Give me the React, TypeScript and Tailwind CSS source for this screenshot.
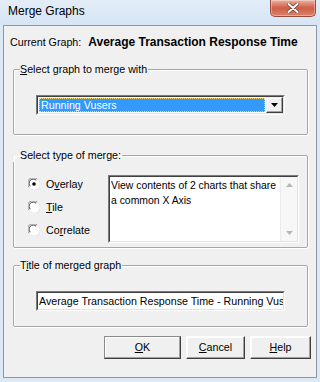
import React from 'react';

const ui = { fontFamily: '"Liberation Sans", Arial, sans-serif' };

function GroupBox({ label, className, children }: { label: React.ReactNode; className?: string; children: React.ReactNode }) {
  return (
    <fieldset
      className={`ml-[3px] w-[295px] min-w-0 border border-[#a5a7a9] rounded-[2px] shadow-[inset_1px_1px_0_#fff,1px_1px_0_#fff] px-[22px] ${className ?? ''}`}
    >
      <legend className="-ml-[16px] pr-[1px] text-[10.7px] leading-[14px] text-black">{label}</legend>
      {children}
    </fieldset>
  );
}

function Radio({ checked, children }: { checked?: boolean; children: React.ReactNode }) {
  return (
    <div className="flex items-center h-[14px] gap-[6px]">
      <svg width="12" height="12" viewBox="0 0 12 12">
        <circle cx="6" cy="6" r="5.5" fill="#fff" />
        <path d="M1.2 9.2 A5.3 5.3 0 0 1 9.2 1.2" stroke="#8a8a8a" strokeWidth="1" fill="none" />
        <path d="M2.3 8.2 A4 4 0 0 1 8.2 2.3" stroke="#404040" strokeWidth="1" fill="none" />
        <path d="M10.8 2.8 A5.3 5.3 0 0 1 2.8 10.8" stroke="#e3e3e3" strokeWidth="1" fill="none" />
        {checked && <circle cx="6" cy="6" r="1.8" fill="#000" />}
      </svg>
      <span className="text-[10.7px] text-black">{children}</span>
    </div>
  );
}

function Button({ children, w, primary }: { children: React.ReactNode; w: string; primary?: boolean }) {
  return (
    <button
      className={`${w} h-[23px] bg-[#f0f0f0] border ${
        primary ? 'border-[#404040] border-t-[#8a8a8a] border-l-[#8a8a8a]' : 'border-t-white border-l-white border-r-[#404040] border-b-[#404040]'
      } shadow-[inset_-1px_-1px_0_#a0a0a0,inset_1px_1px_0_#fff] text-[10.7px] text-black flex items-center justify-center`}
    >
      {children}
    </button>
  );
}

export default function App() {
  return (
    <div className="w-[320px] h-[382px] bg-[#dce8f6] flex flex-col" style={ui}>
      {/* title bar */}
      <div className="h-[25px] flex items-start justify-between bg-gradient-to-b from-[#e3edf8] to-[#d6e4f4]">
        <span className="pl-[8px] pt-[4px] text-[12px] leading-[15px] text-black">Merge Graphs</span>
        <button className="mr-[4px] w-[46px] h-[17px] rounded-b-[5px] border border-t-0 border-[#9a4a3c] bg-gradient-to-b from-[#eab0a0] via-[#cf5d45] to-[#d9826a] flex items-center justify-center shadow-[inset_0_0_0_1px_rgba(255,255,255,0.35)]">
          <svg width="12" height="10" viewBox="0 0 12 10">
            <path d="M1.5 1 L10.5 9 M10.5 1 L1.5 9" stroke="#6a3a30" strokeWidth="3.4" strokeLinecap="round" />
            <path d="M1.5 1 L10.5 9 M10.5 1 L1.5 9" stroke="#fff" strokeWidth="2" strokeLinecap="round" />
          </svg>
        </button>
      </div>

      {/* client area */}
      <div className="flex-1 mx-[3px] mb-[4px] border border-[#8c98a6] bg-[#f0f0f0] pl-[6px] pt-[9px] flex flex-col">
        <div className="flex items-center h-[14px] text-black">
          <span className="text-[10.7px]">Current Graph:</span>
          <span className="ml-[7px] text-[12px] font-bold">Average Transaction Response Time</span>
        </div>

        <GroupBox
          className="mt-[13px] pt-[19px] pb-[19px]"
          label={
            <>
              <u className="underline-offset-1">S</u>elect graph to merge with
            </>
          }
        >
          <div className="h-[20px] flex border border-t-[#7a7a7a] border-l-[#7a7a7a] border-r-white border-b-white">
            <div className="flex-1 flex border border-t-[#404040] border-l-[#404040] border-r-[#e3e3e3] border-b-[#e3e3e3] bg-white">
              <div className="flex-1 m-[1px] bg-[#3399ff] outline outline-1 outline-dotted outline-[#f5d77a] -outline-offset-1 flex items-center pl-[2px]">
                <span className="text-[10.7px] text-white">Running Vusers</span>
              </div>
              <div className="w-[17px] bg-[#f0f0f0] border border-t-[#f0f0f0] border-l-[#f0f0f0] border-r-[#404040] border-b-[#404040] shadow-[inset_-1px_-1px_0_#a0a0a0,inset_1px_1px_0_#fff] flex items-center justify-center">
                <svg width="7" height="4" viewBox="0 0 7 4">
                  <path d="M0 0 H7 L3.5 4 Z" fill="#000" />
                </svg>
              </div>
            </div>
          </div>
        </GroupBox>

        <GroupBox className="mt-[13px] pt-[13px] pb-[4px] !pl-[14px] !pr-[8px]" label={<span className="ml-[8px]">Select type of merge:</span>}>
          <div className="flex">
            <div className="w-[80px] pt-[2px] flex flex-col gap-[9px]">
              <Radio checked>
                O<u className="underline-offset-1">v</u>erlay
              </Radio>
              <Radio>
                <u className="underline-offset-1">T</u>ile
              </Radio>
              <Radio>
                Co<u className="underline-offset-1">r</u>relate
              </Radio>
            </div>
            <div className="w-[191px] h-[68px] flex border border-t-[#7a7a7a] border-l-[#7a7a7a] border-r-white border-b-white">
              <div className="flex-1 flex border border-t-[#404040] border-l-[#404040] border-r-[#e3e3e3] border-b-[#e3e3e3] bg-white">
                <p className="flex-1 pl-[1px] pt-[1px] text-[10.4px] leading-[15px] text-black">
                  View contents of 2 charts that share a common X Axis
                </p>
                <div className="w-[17px] bg-[#f7f7f7] border-l border-[#ececec] flex flex-col items-center justify-between py-[6px]">
                  <svg width="7" height="4" viewBox="0 0 7 4">
                    <path d="M0 4 H7 L3.5 0 Z" fill="#b5b5b5" />
                  </svg>
                  <svg width="7" height="4" viewBox="0 0 7 4">
                    <path d="M0 0 H7 L3.5 4 Z" fill="#b5b5b5" />
                  </svg>
                </div>
              </div>
            </div>
          </div>
        </GroupBox>

        <GroupBox
          className="mt-[10px] pt-[19px] pb-[15px]"
          label={
            <>
              T<u className="underline-offset-1">i</u>tle of merged graph
            </>
          }
        >
          <div className="h-[20px] flex border border-t-[#7a7a7a] border-l-[#7a7a7a] border-r-white border-b-white">
            <div className="flex-1 min-w-0 overflow-hidden whitespace-nowrap border border-t-[#404040] border-l-[#404040] border-r-[#e3e3e3] border-b-[#e3e3e3] bg-white flex items-center pl-[1px]">
              <span className="text-[10.7px] text-black">Average Transaction Response Time - Running Vusers</span>
            </div>
          </div>
        </GroupBox>

        <div className="mt-[9px] w-[301px] flex justify-end gap-[5px]">
          <Button w="w-[77px]" primary>
            <u className="underline-offset-1">O</u>K
          </Button>
          <Button w="w-[59px]">
            <u className="underline-offset-1">C</u>ancel
          </Button>
          <Button w="w-[61px]">
            <u className="underline-offset-1">H</u>elp
          </Button>
        </div>
      </div>
    </div>
  );
}
